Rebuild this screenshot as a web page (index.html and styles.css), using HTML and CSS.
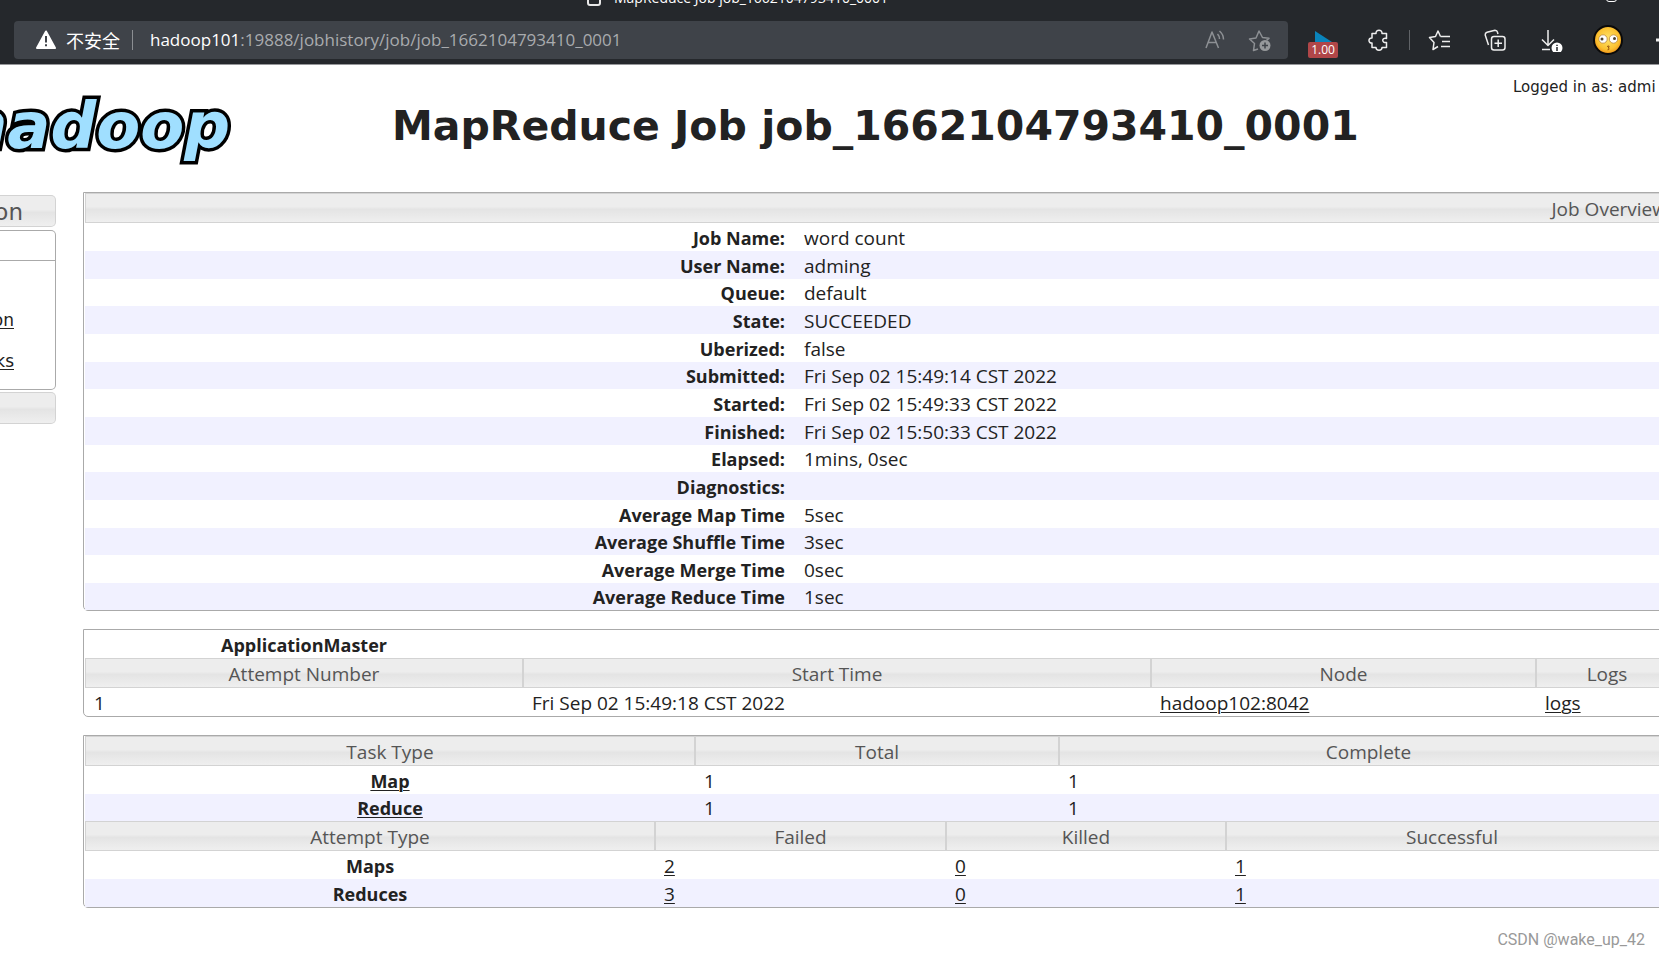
FILE: index.html
```
<!DOCTYPE html>
<html lang="en">
<head>
<meta charset="utf-8">
<title>MapReduce Job job_1662104793410_0001</title>
<link rel="stylesheet" href="styles.css">
</head>
<body>
<header class="browser">
  <div class="tabs">
    <div class="tab"><span class="tab-icon"></span><span>MapReduce Job job_1662104793410_0001</span></div>
    <span class="window-icon"></span>
  </div>
  <div class="toolbar">
    <div class="address">
      <svg class="warn" viewBox="0 0 22 20" width="22" height="20"><path d="M11 1.500 20 18H2z" fill="#fff" stroke="#fff" stroke-width="2" stroke-linejoin="round"/><path d="M11 6v6.500M11 14.300v2" stroke="#3f4349" stroke-width="2"/></svg>
      <span class="insecure">不安全</span>
      <span class="bar"></span>
      <span class="url"><b>hadoop101</b>:19888/jobhistory/job/job_1662104793410_0001</span>
      <button class="tool dim" aria-label="Read aloud"><svg viewBox="0 0 24 24" width="24" height="24"><path d="M3 20 9 4l6.500 16M5.200 14.500h8M14.500 6q2 2 2 5M16.500 3q4 3.500 4 8.500" /></svg></button>
      <button class="tool dim" aria-label="Add favorite"><svg viewBox="0 0 24 24" width="24" height="24"><path d="M10 21l-4.500 1.500 1-7-5-4.500 6.500-1L11 3l3.500 6.500 6.500.8-2.500 2"/><circle cx="17" cy="17.500" r="5.500" fill="#96989b" stroke="none"/><path d="M17 14.500v6M14 17.500h6" stroke="#3f4349"/></svg></button>
    </div>
    <button class="tool" aria-label="Video speed"><svg viewBox="0 0 30 30" width="30" height="30"><path d="M7 6v11h17z" fill="#0a84bb" stroke="none"/></svg><span class="badge">1.00</span></button>
    <button class="tool" aria-label="Extensions"><svg viewBox="0 0 24 24" width="24" height="24"><path d="M5 5.500h4C8.500 1 15.500 1 15 5.500h4.500v5c-5-1.500-5 5 0 4v5H15c0 3.500-6 3.500-6 0H5v-4.500C1 15.500 1 9.500 5 10z"/></svg></button>
    <span class="divider"></span>
    <button class="tool" aria-label="Favorites"><svg viewBox="0 0 24 24" width="24" height="24"><path d="M12.500 8.500 10 3 7.500 8.500l-6 1 4.500 5L5 21.500l5-3M12.500 8.500H22M14 13.500h8M13 18.500h9"/></svg></button>
    <button class="tool" aria-label="Collections"><svg viewBox="0 0 24 24" width="24" height="24"><rect x="7.500" y="8.500" width="13.500" height="13.500" rx="2.500"/><path d="M14.200 11.500v7.500M10.500 15.200H18M4.500 17 1.200 7Q1 5 3 4.300L11 2.200q2 0 2.500 2L14 6"/></svg></button>
    <button class="tool" aria-label="Downloads"><svg viewBox="0 0 24 24" width="24" height="24"><path d="M8 2v15M2 11.500l6 6 6-6M2 21.500h8"/><circle cx="17" cy="20" r="5.500" fill="#fff" stroke="none"/><path d="M17 19v4M17 16.800v1.200" stroke="#25282c"/></svg></button>
    <button class="tool" aria-label="Profile"><svg viewBox="0 0 30 30" width="30" height="30"><defs><radialGradient id="face" cx=".5" cy=".45" r=".55"><stop offset="0" stop-color="#ffe36b"/><stop offset=".7" stop-color="#fbc231"/><stop offset="1" stop-color="#ee8f16"/></radialGradient></defs><circle cx="15" cy="15" r="14" fill="url(#face)" stroke="#0a0a0a" stroke-width="2"/><circle cx="10" cy="14" r="4.200" fill="#fff" stroke="#b9863a" stroke-width=".8"/><circle cx="20.500" cy="14" r="4.200" fill="#fff" stroke="#b9863a" stroke-width=".8"/><circle cx="9" cy="14" r="1.500" fill="#4c4230" stroke="none"/><circle cx="21.500" cy="13.500" r="1.500" fill="#4c4230" stroke="none"/><path d="M14 21.500q3-1.500 2 .8-2 .4 0 1 .5 1.700-1.500 1.500" stroke="#9a5a12" stroke-width="1"/></svg></button>
    <button class="tool" aria-label="More"><svg viewBox="0 0 30 30" width="30" height="30"><path d="M7 15h3M14 15h3M21 15h3" stroke-width="3"/></svg></button>
  </div>
</header>

<div class="page">
  <div class="masthead">
    <div class="logo"><span>hadoop</span></div>
    <h1>MapReduce Job job_1662104793410_0001</h1>
    <div class="user">Logged in as: admi</div>
  </div>

  <div class="columns">
    <nav class="side">
      <h3 class="side-head">on</h3>
      <div class="side-panel">
        <div class="side-top"></div>
        <a href="#">on</a>
        <a href="#">ks</a>
      </div>
      <h3 class="side-head"></h3>
    </nav>

    <main>
      <div class="box">
        <table class="info">
          <colgroup><col class="w-label"><col></colgroup>
          <thead><tr><th colspan="2">Job Overview</th></tr></thead>
          <tbody>
            <tr><th>Job Name:</th><td>word count</td></tr>
            <tr><th>User Name:</th><td>adming</td></tr>
            <tr><th>Queue:</th><td>default</td></tr>
            <tr><th>State:</th><td>SUCCEEDED</td></tr>
            <tr><th>Uberized:</th><td>false</td></tr>
            <tr><th>Submitted:</th><td>Fri Sep 02 15:49:14 CST 2022</td></tr>
            <tr><th>Started:</th><td>Fri Sep 02 15:49:33 CST 2022</td></tr>
            <tr><th>Finished:</th><td>Fri Sep 02 15:50:33 CST 2022</td></tr>
            <tr><th>Elapsed:</th><td>1mins, 0sec</td></tr>
            <tr><th>Diagnostics:</th><td></td></tr>
            <tr><th>Average Map Time</th><td>5sec</td></tr>
            <tr><th>Average Shuffle Time</th><td>3sec</td></tr>
            <tr><th>Average Merge Time</th><td>0sec</td></tr>
            <tr><th>Average Reduce Time</th><td>1sec</td></tr>
          </tbody>
        </table>
      </div>

      <div class="box">
        <table class="master">
          <colgroup><col class="w-number"><col class="w-start"><col class="w-node"><col></colgroup>
          <tbody>
            <tr><th>ApplicationMaster</th><td colspan="3"></td></tr>
            <tr class="head"><th>Attempt Number</th><th>Start Time</th><th>Node</th><th>Logs</th></tr>
            <tr><td>1</td><td>Fri Sep 02 15:49:18 CST 2022</td><td><a href="#">hadoop102:8042</a></td><td><a href="#">logs</a></td></tr>
          </tbody>
        </table>
      </div>

      <div class="box">
        <table class="tasks">
          <colgroup><col class="w-task"><col class="w-total"><col></colgroup>
          <thead><tr class="head"><th>Task Type</th><th>Total</th><th>Complete</th></tr></thead>
          <tbody>
            <tr><th><a href="#">Map</a></th><td>1</td><td>1</td></tr>
            <tr><th><a href="#">Reduce</a></th><td>1</td><td>1</td></tr>
          </tbody>
        </table>
        <table class="attempts">
          <colgroup><col class="w-attempt"><col class="w-failed"><col class="w-killed"><col></colgroup>
          <thead><tr class="head"><th>Attempt Type</th><th>Failed</th><th>Killed</th><th>Successful</th></tr></thead>
          <tbody>
            <tr><th>Maps</th><td><a href="#">2</a></td><td><a href="#">0</a></td><td><a href="#">1</a></td></tr>
            <tr><th>Reduces</th><td><a href="#">3</a></td><td><a href="#">0</a></td><td><a href="#">1</a></td></tr>
          </tbody>
        </table>
      </div>
    </main>
  </div>
  <footer class="credit">CSDN @wake_up_42</footer>
</div>
</body>
</html>
```
FILE: styles.css
```
* { box-sizing: border-box; }

body {
  margin: 0;
  overflow: hidden;
  background: #fff;
  color: #222;
  font: 19px/28px "Open Sans", "Noto Sans", sans-serif;
}

a { color: inherit; text-underline-offset: 2px; text-decoration-thickness: 1px; }

/* Browser chrome */
.browser {
  background: #25282c;
  border-bottom: 1px solid #96979a;
  padding-bottom: 5px;
  overflow: hidden;
}

.tabs {
  display: flex;
  justify-content: space-between;
  height: 21px;
  padding: 0 42px 0 587px;
  overflow: hidden;
  color: #fff;
  font-size: 14px;
  line-height: 20px;
}

.tab { display: flex; gap: 13px; margin-top: -12px; }

.tab-icon {
  width: 14px;
  height: 18px;
  border: 2px solid #e8e8e8;
  border-radius: 3px;
}

.window-icon {
  width: 11px;
  height: 14px;
  margin-top: -12px;
  border: 1px solid #fff;
  border-radius: 3px;
}

.toolbar {
  display: flex;
  align-items: center;
  gap: 26px;
  margin: 0 -20px 0 14px;
}

.address {
  display: flex;
  flex: 1;
  align-items: center;
  height: 38px;
  margin-right: -6px;
  padding: 0 13px 0 21px;
  border-radius: 4px;
  background: #3f4349;
}

.insecure {
  margin-left: 9px;
  color: #fff;
  font: 18px/26px "Noto Sans CJK SC", sans-serif;
}

.bar { width: 1px; height: 20px; margin: 0 17px 0 12px; background: #8b8e92; }
.url { flex: 1; color: #a9abae; font-size: 17px; line-height: 28px; }
.url b { color: #fff; font-weight: 400; }

.tool {
  position: relative;
  display: flex;
  align-items: center;
  justify-content: center;
  width: 30px;
  height: 30px;
  padding: 0;
  border: 0;
  background: none;
  color: #eee;
}

.tool svg { fill: none; stroke: currentColor; stroke-width: 1.5; stroke-linejoin: round; }
.dim { color: #8d9094; }
.dim + .dim { margin-left: 15px; }

.badge {
  position: absolute;
  bottom: -3px;
  left: 0;
  width: 30px;
  border-radius: 2px;
  background: #b04648;
  color: #fff;
  font: 12px/16px "Open Sans", sans-serif;
}

.divider { width: 1px; height: 20px; margin: 0 -11px; background: #606367; }

/* Page header */
.masthead {
  display: grid;
  grid-template-columns: 232px 1fr 146px;
  height: 127px;
}

.logo {
  display: flex;
  justify-content: flex-end;
  align-items: flex-start;
  overflow: hidden;
  padding: 27px 2px 0 0;
}

.logo span {
  color: #a0dfff;
  font: italic bold 64px/68px "DejaVu Sans", sans-serif;
  -webkit-text-stroke: 7px #000;
  paint-order: stroke fill;
}

h1 {
  margin: 36px 0 0 160px;
  font: bold 41px/50px "DejaVu Sans", sans-serif;
  white-space: nowrap;
}

.user {
  padding-top: 11px;
  font: 15px/22px "DejaVu Sans", sans-serif;
  white-space: nowrap;
}

/* Body columns */
.columns {
  display: grid;
  grid-template-columns: 56px 1fr;
  gap: 27px;
  margin-right: -20px;
}

.side { padding-top: 3px; font-family: "DejaVu Sans", sans-serif; }

.side-head,
thead th,
.head th {
  border: 1px solid #d3d3d3;
  background: linear-gradient(#ededed 0 45%, #e4e4e4 55%, #efefef);
  color: #555;
  font-weight: 400;
}

.side-head {
  display: flex;
  justify-content: flex-end;
  height: 32px;
  margin: 0;
  padding-right: 32px;
  border-left: 0;
  border-radius: 0 5px 5px 0;
  font-size: 23px;
  line-height: 32px;
}

.side-panel {
  display: flex;
  flex-direction: column;
  align-items: flex-end;
  height: 160px;
  margin: 3px 0 2px;
  border: 1px solid #aaa;
  border-left: 0;
  border-radius: 0 5px 5px 0;
  font-size: 17px;
}

.side-top { width: 100%; height: 31px; margin-bottom: 45px; border-bottom: 1px solid #aaa; }
.side-panel a { height: 43px; margin-right: 41px; line-height: 28px; }

/* Tables */
.box {
  margin-bottom: 18px;
  padding-left: 1px;
  border: 1px solid #aaa;
  border-radius: 0 0 5px 5px;
}

table { width: 100%; table-layout: fixed; border-collapse: separate; border-spacing: 0; }
th, td { height: 28px; padding: 2px 9px 0; line-height: 26px; }
td { text-align: left; }
tbody th { font-size: 18px; }
thead th, .head th { height: 30px; font-size: 19px; line-height: 26px; }
tbody tr:nth-child(even):not(.head) { background: #f1f1ff; }

.info th { text-align: right; }
.info th, .info td { padding-right: 10px; }

/* Shorter rows keep the average row pitch between 27px and 28px */
.info tbody tr:nth-child(3n) > *,
.info tbody tr:last-child > *,
.tasks tbody tr:last-child > * { height: 27px; line-height: 25px; }

.w-label { width: 710px; }
.w-number { width: 438px; }
.w-start { width: 628px; }
.w-node { width: 385px; }
.w-task { width: 610px; }
.w-total { width: 364px; }
.w-attempt { width: 570px; }
.w-failed { width: 291px; }
.w-killed { width: 280px; }

.credit {
  padding-right: 14px;
  color: #999;
  font: 16px/28px Roboto, sans-serif;
  text-align: right;
}
```
